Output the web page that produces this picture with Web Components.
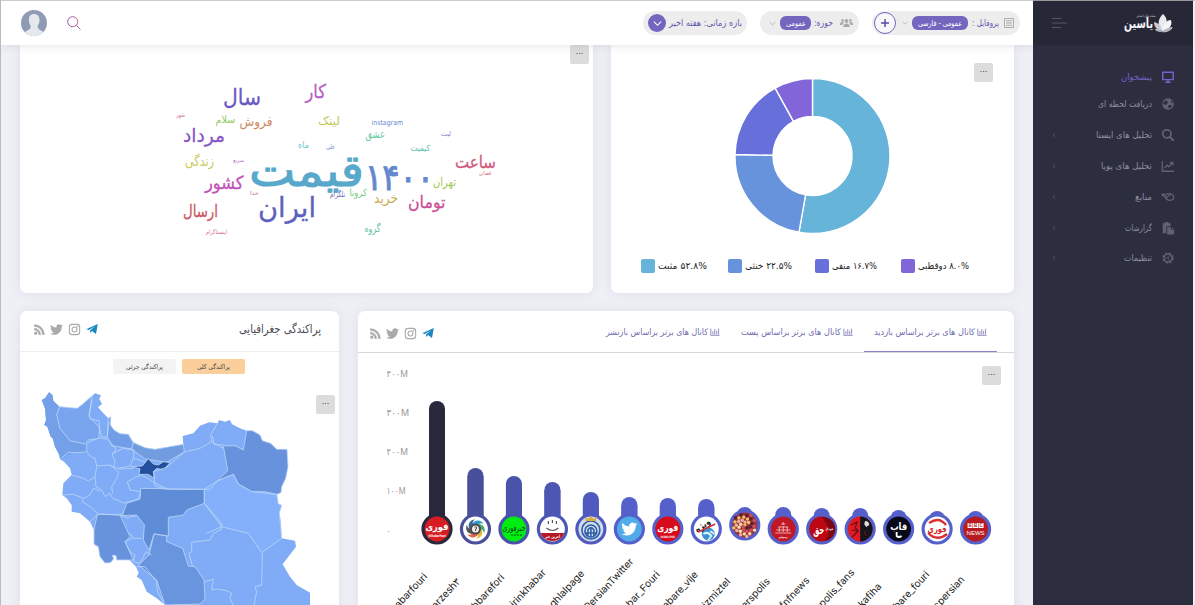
<!DOCTYPE html>
<html lang="fa"><head><meta charset="utf-8"><title>یاسین</title>
<style>html,body{margin:0;height:100%;overflow:hidden;background:#eff0f6;font-family:"DejaVu Sans","Noto Sans",sans-serif}</style></head>
<body><yasin-app></yasin-app>
<script>
const FONT='"DejaVu Sans","Noto Sans",sans-serif';
function define(name,render){customElements.define(name,class extends HTMLElement{connectedCallback(){if(this.shadowRoot)return;const r=this.attachShadow({mode:'open'});const t=document.createElement('template');t.innerHTML=render(this);r.append(t.content.cloneNode(true));}});}
const A=(e,n,d)=>e.getAttribute(n)??d;

/* one-line Persian label with a fixed measure */
define('fa-label',e=>{const w=+A(e,'w',50),s=+A(e,'s',9);return `<style>:host{display:block;flex:none;line-height:0}svg{display:block;overflow:visible}</style><svg width="${w}" height="16"><text x="${w/2}" y="${8+s*.33}" text-anchor="middle" direction="rtl" textLength="${w}" lengthAdjust="spacingAndGlyphs" fill="currentColor" font-size="${s}" font-family='${FONT}'>${e.textContent}</text></svg>`});

const ICONS={
monitor:['0 0 16 16','<path d="M2 2.5h12v8.5H2zM8 11v2.5M5 14h6" fill="none" stroke="currentColor" stroke-width="1.7"/>'],
globe:['0 0 16 16','<circle cx="8" cy="8" r="6.6" fill="currentColor"/><path d="M2 7l3-3 3 1-1 3-3 1zM9 9l3 0v2l-2 2-2-2zM11 3l3 3-2 1z" fill="#2c2d3e"/>'],
search:['0 0 16 16','<circle cx="6.7" cy="6.7" r="4.7" fill="none" stroke="currentColor" stroke-width="2"/><path d="M10 10l4.5 4.5" stroke="currentColor" stroke-width="2.4"/>'],
line:['0 0 16 16','<path d="M1.5 2.5v11.5h13.500M4 10.500l3-3.500 2 2 4-5M10 4h3.500v3.500" fill="none" stroke="currentColor" stroke-width="1.500"/>'],
sources:['0 0 16 16','<path d="M4.500 8C5 3 13 3 14.500 8c0 5-8 5-10 0L1 4M1 7l3-3M5 9c3 1 2-4 6-3" fill="none" stroke="currentColor" stroke-width="1.400"/>'],
paste:['0 0 16 16','<path d="M2 2.500h2.500V1h4v1.500H11V6H6v8H2zM7 7h4.500v3H15v5.500H7z" fill="currentColor"/><path d="M12.500 7v2H15z" fill="currentColor"/>'],
gear:['0 0 16 16','<circle cx="8" cy="8" r="5.200" fill="none" stroke="currentColor" stroke-width="2.400" stroke-dasharray="2.700 1.380"/><circle cx="8" cy="8" r="4.500" fill="none" stroke="currentColor" stroke-width="1"/><path d="M8 8l3-4M8 8l2 4M8 8H4" stroke="currentColor"/>'],
list:['0 0 16 16','<path d="M2 2h12v12H2z" fill="none" stroke="currentColor" stroke-width="1.300"/><path d="M4 5h8M4 8h8M4 11h8" stroke="currentColor" stroke-width="1.500"/>'],
users:['0 0 20 16','<g fill="currentColor"><circle cx="10" cy="5" r="3"/><circle cx="4" cy="4" r="2"/><circle cx="16" cy="4" r="2"/><path d="M5 14c0-7 10-7 10 0zM0 10c0-5 5-4 6-2-2 1-2 2-2 3H0zM20 10c0-5-5-4-6-2 2 1 2 2 2 3h4z"/></g>'],
down:['0 0 10 10','<path d="M1 3l4 4 4-4" fill="none" stroke="currentColor" stroke-width="1.200"/>'],
left:['0 0 10 10','<path d="M6.500 2.500l-2.500 2.500 2.500 2.500" fill="none" stroke="currentColor" stroke-width="1"/>'],
rss:['3.500 3.500 17 17','<path d="M6.180 15.640a2.180 2.180 0 1 1 0 4.360 2.180 2.180 0 0 1 0-4.360M4 4.440A15.560 15.560 0 0 1 19.560 20h-2.830A12.730 12.730 0 0 0 4 7.270zm0 5.660a9.900 9.900 0 0 1 9.900 9.900h-2.830A7.070 7.070 0 0 0 4 12.930z" fill="currentColor" stroke="currentColor" stroke-width=".7"/>'],
twitter:['0 0 24 24','<path d="M23.950 4.570a10 10 0 0 1-2.820.770 4.960 4.960 0 0 0 2.160-2.720c-.95.55-2 .95-3.130 1.180a4.920 4.920 0 0 0-8.380 4.480C7.690 8.090 4.070 6.130 1.640 3.160a4.820 4.820 0 0 0-.67 2.480c0 1.710.87 3.210 2.190 4.100a4.900 4.900 0 0 1-2.230-.620v.060a4.920 4.920 0 0 0 3.950 4.830 5 5 0 0 1-2.210.080 4.940 4.940 0 0 0 4.600 3.420A9.870 9.870 0 0 1 0 19.540a13.990 13.990 0 0 0 7.550 2.210c9.050 0 14-7.500 14-13.990 0-.210 0-.420-.02-.630a9.940 9.940 0 0 0 2.420-2.560z" fill="currentColor"/>'],
insta:['0 0 24 24','<g fill="none" stroke="currentColor" stroke-width="2"><rect x="2.500" y="2.500" width="19" height="19" rx="5"/><circle cx="12" cy="12" r="4.500"/></g><circle cx="17.500" cy="6.500" r="1.500" fill="currentColor"/>'],
telegram:['0 0 24 24','<path d="M.5 12.300L23.500 2 20 22l-8-5.800-3.500 3.600L8 15 18 6.500 5.800 14z" fill="currentColor"/>'],
bars:['0 0 12 12','<path d="M1 2v8h10.500M3.500 9V5M5.700 9V2.500M8 9V4.500M10.300 9V2" fill="none" stroke="currentColor" stroke-width=".9"/>']};
define('ui-icon',e=>{const [vb,p]=ICONS[A(e,'name')],w=A(e,'w',13),h=A(e,'h',w);return `<style>:host{display:block;flex:none}svg{display:block}</style><svg width="${w}" height="${h}" viewBox="${vb}">${p}</svg>`});

define('more-button',()=>`<style>:host{display:block;width:19px;height:19px;background:#dcdcdc;border-radius:2px;position:absolute}svg{display:block}</style><svg width="19" height="19"><path d="M6.500 8.500h1.200M9 8.500h1.200M11.500 8.500h1.200" stroke="#666" stroke-width="1"/></svg>`);

define('ui-card',()=>`<style>:host{display:block;position:relative;background:#fff;border-radius:7px;box-shadow:0 0 12px rgba(90,95,140,.12);box-sizing:border-box;overflow:hidden}</style><slot></slot>`);

define('filter-pill',()=>`<style>:host{display:flex;flex:none;align-items:center;height:24px;border-radius:12px;background:#ededee;box-sizing:border-box;color:#5f58ae}</style><slot></slot>`);
define('value-chip',e=>`<style>:host{display:flex;flex:none;align-items:center;justify-content:center;height:14px;border-radius:6px;background:#7465bf;color:#fff}</style><slot></slot>`);

define('top-bar',()=>`<style>
:host{display:flex;align-items:center;height:45px;box-sizing:border-box;border-top:1px solid #ccc;background:#fff;position:relative;z-index:2;box-shadow:0 1px 8px rgba(60,60,90,.13);padding:0 13px 0 20px}
.av{width:26px;height:26px;flex:none;margin-right:20px}.av svg,.s svg{display:block}.s{flex:1}
.gap{width:13px;flex:none}.dn{width:18px;height:18px;border-radius:50%;background:#7465bf;color:#fff;display:flex;align-items:center;justify-content:center;margin:0 3px 0 5px}
.plus{width:20px;height:20px;border:1px solid #7465bf;border-radius:50%;display:flex;align-items:center;justify-content:center;background:#f8f8fb;margin:0 6px 0 2px}
.g{color:#aaa}</style>
<div class="av"><svg width="26" height="26" viewBox="0 0 26 26"><defs><clipPath id="c"><circle cx="13" cy="13" r="13"/></clipPath></defs><g clip-path="url(#c)"><path d="M0 0h26v26H0z" fill="#8f9bb5"/><path d="M13 4c-4 0-5.500 3-5 7 .2 3 1.500 4 1.700 5 .4 4-5 4-6 7l3 4h13l3-4c-1-3-6.400-3-6-7 .2-1 1.500-2 1.700-5 .5-4-1.400-7-5.400-7z" fill="#e4e9ee"/></g></svg></div>
<div class="s"><svg width="14" height="14" viewBox="0 0 14 14"><defs><linearGradient id="g"><stop stop-color="#8a4fc0"/><stop offset="1" stop-color="#d05a8a"/></linearGradient></defs><g fill="none" stroke="url(#g)"><circle cx="5.700" cy="5.700" r="5"/><path d="M9.500 9.500L13.500 13.500"/></g></svg></div>
<filter-pill style="width:104px"><div class="dn"><ui-icon name="down" w="9"></ui-icon></div><fa-label w="73" s="9">بازه زمانی: هفته اخیر</fa-label></filter-pill><div class="gap"></div>
<filter-pill style="width:99px"><ui-icon class="g" name="down" w="7" style="margin:0 4px 0 9px"></ui-icon><value-chip style="width:31px"><fa-label w="20" s="8">عمومی</fa-label></value-chip><fa-label w="19" s="9" style="margin:0 7px 0 3px">حوزه:</fa-label><ui-icon class="g" name="users" w="13" h="12"></ui-icon></filter-pill><div class="gap"></div>
<filter-pill style="width:148px"><div class="plus"><svg width="8" height="8" style="display:block"><path d="M4 0v8M0 4h8" stroke="#5148a5" stroke-width="1.400"/></svg></div><ui-icon class="g" name="down" w="6"></ui-icon><value-chip style="width:56px;margin:0 4px"><fa-label w="44" s="8">عمومی - فارسی</fa-label></value-chip><fa-label w="27" s="9">پروفایل :</fa-label><ui-icon class="g" name="list" w="12" style="margin-left:4px"></ui-icon></filter-pill>`);

define('nav-item',e=>`<style>:host{display:flex;align-items:center;height:30.800px;color:${e.hasAttribute('on')?'#7263c8':'#8d8fa3'};padding:0 18px 0 17px}.i{color:${e.hasAttribute('on')?'#7263c8':'#5f6177'};margin-left:9px}.c{color:#53556a}.f{flex:1}</style>${e.hasAttribute('leaf')?'':'<ui-icon class="c" name="left" w="8"></ui-icon>'}<div class="f"></div><fa-label w="${A(e,'w')}" s="9">${A(e,'label')}</fa-label><ui-icon class="i" name="${A(e,'icon')}" w="14"></ui-icon>`);
define('side-bar',()=>`<style>:host{display:block;background:#2c2d3e;height:605px;border-right:2px solid #eceef2;box-sizing:border-box;border-top:1px solid #999}.h{height:44px;background:#262838;display:flex;align-items:center;justify-content:space-between;padding:0 20px 0 18px;color:#fff;margin-bottom:19px}nav{display:flex;flex-direction:column}svg{display:block}</style>
<div class="h"><svg width="17" height="12"><path d="M1 1.500h9M1 6h15M1 10.500h9" stroke="#555768"/></svg>
<svg width="50" height="24" viewBox="1124 10 50 24"><text x="1139.500" y="27" text-anchor="middle" textLength="29" lengthAdjust="spacingAndGlyphs" font-weight="bold" font-size="14" font-family="DejaVu Sans" fill="#f4f4f7">یاسین</text><text x="1147" y="16" text-anchor="middle" textLength="19" lengthAdjust="spacingAndGlyphs" font-size="3.500" font-family="DejaVu Sans" fill="#ddd">سامانه تحلیل اجتماعی</text><path d="M1163 30c-6-7-3-13 1-17 5 4 5 11-1 17z" fill="#e9eaee"/><path d="M1163 30c-5-1-8-4-8-9 5 1 7 4 8 9z" fill="#c9cad2"/><path d="M1163 30c1-7 4-11 9-11 2 6-3 11-9 11z" fill="#f4f4f6"/><path d="M1162 31c4-3 8-5 12-5-2 4-6 6-12 5zM1163 31c-3 0-6 0-7-3 3-1 5 0 7 3z" fill="#b3b6c2"/></svg></div>
<nav><nav-item on leaf icon="monitor" w="31" label="پیشخوان" style="height:26px;margin-bottom:-1px"></nav-item><nav-item leaf icon="globe" w="54" label="دریافت لحظه ای"></nav-item><nav-item icon="search" w="56" label="تحلیل های ایستا"></nav-item><nav-item icon="line" w="51" label="تحلیل های پویا"></nav-item><nav-item icon="sources" w="17" label="منابع"></nav-item><nav-item icon="paste" w="27" label="گزارشات"></nav-item><nav-item icon="gear" w="28" label="تنظیمات"></nav-item></nav>`);

/* words: text, left, right, baseline, size, colour */
const WORDS=[['قیمت',249,364,186,44,'#58a8cb'],['۱۴۰۰',365,434,189.500,37,'#6488cf'],['ایران',258,316,217,28,'#5d61bd'],['سال',223,261,105,22,'#6a5ac4'],['کار',305.500,326,98,19,'#b660c5'],['مرداد',183,225,142,19,'#8855c8'],['فروش',239.500,272.500,126,13.500,'#cf8867'],['سلام',215.500,235.500,122.500,10.500,'#8fcb62'],['شهر',176,185,116.500,6.500,'#d47fa9'],['لینک',318,340,124.500,12,'#c2ca5c'],['instagram',371.500,403,124.500,7,'#6587cf'],['عشق',365.500,385,138,10.500,'#62caa0'],['لیت',441,451,135.500,6.500,'#8b79cd'],['ماه',298,309,147.500,9,'#66c9ca'],['علی',326,335,148.500,6.500,'#7683cf'],['کیفیت',410.500,430,151,8.500,'#59bfb1'],['ساعت',455,496,167.500,17,'#d45a7d'],['قضائی',479,491,175,5.500,'#d86979'],['زندگی',185,214,166,14,'#ccca58'],['سریع',233,244,162,5.500,'#b472ca'],['کشور',205,243.500,188.500,18,'#c253b9'],['خدا',250,259,195,5.500,'#d0708f'],['تلگرام',330,345,196.500,8,'#6360b0'],['کرونا',349.500,367,195.500,10,'#77cc79'],['تهران',433,456,186,12,'#a2c95a'],['خرید',374,398,202.500,14,'#cda953'],['تومان',408,445.500,207.500,17,'#cc5096'],['ارسال',183,218,217,17,'#cb5862'],['اینستاگرام',206,227,234,6,'#d46a91'],['گروه',364.500,380.500,231.500,10.500,'#58c5a0']];
define('word-cloud',()=>`<style>:host{display:block}svg{display:block}</style><svg width="573" height="248" viewBox="20 45 573 248">${WORDS.map(([t,l,r,y,s,c])=>`<text x="${(l+r)/2}" y="${y}" text-anchor="middle" textLength="${r-l}" lengthAdjust="spacingAndGlyphs" font-size="${s}" fill="${c}" stroke="${c}" stroke-width="${s>30?1:s>16?.3:0}" font-family='${FONT}'>${t}</text>`).join('')}</svg>`);

define('sentiment-donut',()=>{const cx=812.500,cy=156,R=77.500,r=39.500;let a=0;const p=(q,k)=>[cx+k*Math.sin(q*2*Math.PI),cy-k*Math.cos(q*2*Math.PI)];
const seg=[[.528,'#66b4da'],[.225,'#6693dc'],[.167,'#666fda'],[.080,'#8266d9']].map(([v,c])=>{const b=a+v,l=v>.5?1:0,d=`M${p(a,R)}A${R} ${R} 0 ${l} 1 ${p(b,R)}L${p(b,r)}A${r} ${r} 0 ${l} 0 ${p(a,r)}Z`;a=b;return `<path d="${d}" fill="${c}" stroke="#fff" stroke-width="1.400"/>`}).join('');
return `<style>:host{display:block}svg{display:block}.l{display:flex;padding-left:30px}.k{display:flex;align-items:center;height:16px;gap:3px;color:#222;flex:none}.k i{width:14px;height:14px;border-radius:2px}</style><svg width="403" height="213" viewBox="611 45 403 213">${seg}</svg><div class="l">${[['#66b4da',49,'۵۲.۸% مثبت',87],['#6693dc',47,'۲۲.۵% خنثی',87],['#666fda',45,'۱۶.۷% منفی',86],['#8266d9',51,'۸.۰% دوقطبی',80]].map(([c,w,t,k])=>`<div class="k" style="width:${k}px"><i style="background:${c}"></i><fa-label w="${w}" s="9.500">${t}</fa-label></div>`).join('')}</div>`});

define('social-links',()=>`<style>:host{display:flex;gap:5px;align-items:center;color:#aaa;flex:none}</style><ui-icon name="rss" w="11"></ui-icon><ui-icon name="twitter" w="13"></ui-icon><ui-icon name="insta" w="13"></ui-icon><ui-icon name="telegram" w="12" style="color:#1a87c0"></ui-icon>`);

define('iran-map',()=>`<style>:host{display:block}svg{display:block}</style><svg width="330" height="225" viewBox="0 0 990 675"><g stroke="#b9d5f8" stroke-width="2.500" stroke-linejoin="round">
<path fill="#80abf6" stroke="none" d="M65 60L75 55 87 37 97 45 100 62 118 80 150 85 172 85 185 75 200 62 225 40 243 46 238 57 246 72 234 82 250 100 265 115 272 110 271 135 282 150 300 161 325 163 340 186 375 203 405 208 450 200 490 195 488 168 520 160 540 137 568 127 593 130 597 120 615 125 630 120 636 133 660 145 680 152 697 152 720 165 727 182 752 190 770 208 801 208 800 235 804 260 797 295 785 320 783 338 771 343 775 372 785 376 778 398 783 430 785 475 825 482 828 500 788 553 810 590 830 615 870 638 870 675 435 675 410 655 380 635 365 600 350 590 356 578 348 560 328 540 290 540 288 527 277 526 281 536 271 548 255 549 240 530 235 500 222 493 222 450 210 425 180 400 155 395 155 375 140 355 127 345 130 310 155 285 150 265 132 245 120 238 118 225 105 200 98 175 92 170 82 140 73 135 78 120 75 85Z"/>
<path fill="#74a0ea" stroke="none" d="M65 60L75 55 87 37 97 45 100 62 118 80 110 105 120 145 150 182 200 187 200 218 165 215 120 238 118 225 105 200 98 175 92 170 82 140 73 135 78 120 75 85Z"/>
<path fill="#79a5ef" d="M118 80L172 85 185 75 216 48 207 108 238 142 237 175 205 180 195 192 150 182 120 145 110 105Z"/>
<path fill="#719ee7" d="M265 115L272 110 271 135 282 150 300 161 325 163 340 190 335 207 275 197 262 170Z"/>
<path fill="#719cdf" d="M340 188L375 203 405 208 490 193 493 216 440 247 375 237 335 207Z"/>
<path fill="#6992dc" d="M680 152L697 152 720 165 727 182 752 190 770 208 801 208 804 260 797 295 785 320 783 338 770 343 735 335 695 335 655 312 640 283 592 303 612 283 623 272 610 198 645 197 670 210Z"/>
<path fill="#5f8cd7" d="M362 325L553 328 553 370 500 390 490 405 445 412 445 468 402 462 387 510 370 480 373 435 350 405 307 407 320 370 360 357Z"/>
<path fill="#6994de" d="M402 462L440 468 440 485 488 505 505 558 525 560 552 600 555 658 540 672 435 675 410 600 355 555 387 525Z"/>
<path fill="#6792dc" d="M232 402L300 405 330 470 315 485 340 540 290 540 288 527 277 526 281 536 271 548 255 549 240 530 235 500 222 493 222 450Z"/>
<path fill="#84b0fb" d="M553 328L592 303 640 283 655 312 695 335 770 343 775 372 785 376 778 398 785 475 725 518 685 460 605 440 553 370Z"/>
<path fill="#23509c" d="M333 260L367 258 385 236 400 252 415 255 430 245 450 248 430 270 410 265 400 275 405 296 385 283 357 283 360 266Z"/>
<path fill="none" d="M216 60L207 108 212 118 238 122 238 142 245 170 262 172 267 125M200 192L215 182 240 173 262 178 280 197 288 210 276 222 285 245 280 260 300 267 340 265M200 192V215L215 232 225 235 230 258 270 255 280 262M120 238L145 217 175 218 200 215M155 285L190 295 205 303 225 290 230 260M225 290L228 320 245 330 255 350 270 340 278 355 310 368M270 255L295 275 293 290 275 320 278 340M127 345L160 343 190 355 210 345 220 325 240 333M190 355L187 365 210 380 235 402 300 405 310 400M210 425L235 402M276 222L310 205 342 210 340 235 375 245M340 235L330 258 295 265M322 305L345 293 362 285 385 295 405 310 440 325M322 305L330 330 362 335 355 357 310 370M300 405L325 415 330 410 350 408M315 485L340 473 330 460M365 475L340 475M315 485L330 515 345 525 340 545 360 550 378 515 395 525M350 560L375 560 410 605 412 635 432 670M400 275L440 262 493 216 540 205 575 185 572 165 592 130M575 185L610 205M400 275L405 318 440 328H570L592 303M578 168L582 193 610 195M553 370L605 430 604 448 580 460 570 480 515 487M605 440L560 460M515 487L515 515 507 520 517 558M727 518L725 615 705 620 710 635 702 675M553 605L580 598 575 630 590 627 620 632 635 640 630 655 640 675"/></g></svg>`);
define('geo-card',()=>`<style>:host{display:block}.h{height:41px;border-bottom:1px solid #ececec;box-sizing:border-box;display:flex;align-items:center;justify-content:space-between;padding:0 18px 4px 14px;color:#4c4c55}.b{display:flex;justify-content:center;gap:6px;padding-top:7px;height:21px;align-items:flex-start;box-sizing:content-box;width:318px}.b div{width:63px;height:15px;border-radius:2px;background:#f3f3f3;display:flex;justify-content:center;align-items:center;color:#444}.b .o{background:#fbcf9b}</style><div class="h"><social-links></social-links><fa-label w="82" s="12">پراکندگی جغرافیایی</fa-label></div><div class="b"><div><fa-label w="37" s="6.500">پراکندگی جزئی</fa-label></div><div class="o"><fa-label w="33" s="6.500">پراکندگی کلی</fa-label></div></div><iran-map></iran-map><more-button style="left:296px;top:84px"></more-button>`);

const F=(x,y,w,s,c,t,b='bold')=>`<text x="${x}" y="${y}" text-anchor="middle" textLength="${w}" lengthAdjust="spacingAndGlyphs" font-size="${s}" font-weight="${b}" fill="${c}" font-family='${FONT}'>${t}</text>`;
const LOGOS=[
['#d71d22',F(0,1,23,10,'#fff','فوری')+F(0,8,18,3.500,'#fff','@KhabarFouri')],
['#fff',['#2d9ac8','#4ba875','#e4b83e','#dd6645','#555','#386b9b'].map((c,i)=>`<path d="M-3-5C0-10 6-9 8-5 5-7 3-5 2-3z" fill="${c}" transform="rotate(${i*60})"/>`).join('')+'<circle r="5.500" fill="#4b4b4b"/><circle r="3.500" fill="#eee"/><path d="M-1-2h2v2H0v2" fill="none" stroke="#555"/>'],
['#00ed12',F(0,2,23,9,'#073b10','خبرفوری','normal')+'<path d="M-3 6H9" stroke="#064d0f" stroke-dasharray="2 1"/>'],
['#fff','<path d="M-12 4H12A13 13 0 0 1-12 4z" fill="#b51827"/><path d="M-6-1q6 5 12 0M-4-5v-3M0-6v-3M4-5v-3" fill="none" stroke="#555" stroke-width="1.200"/>'+F(0,9,15,4,'#fff','آخرین خبر')],
['#d2dcec','<g fill="none" stroke="#2f5ea8" stroke-width="1.600"><circle r="9" cy="1"/><circle r="6" cy="2"/><path d="M-3 7v-6q3-5 6 0v6M-6 4h12M0-2v10"/></g><path d="M-5-8l-1-4 3 2 3-3 3 3 3-2-1 4z" fill="#d8af46"/>'],
['#50abe9','<svg x="-8" y="-8" width="16" height="16" viewBox="0 0 24 24"><g color="#fff">'+ICONS.twitter[1]+'</g></svg>'],
['#d60b1b',F(0,2,21,10,'#fff','فوری')+F(0,9,14,3,'#fff','KHABAR_FOURI')],
['#fff','<circle cx="2" cy="5" r="6.500" fill="#3a92cf"/><path d="M-3 5q5-3 8 2l-3 4M4 2l4 3" stroke="#d6efff" stroke-width="2" fill="none"/><g transform="rotate(-35)">'+F(-1,-2,17,9,'#222','ویژه')+'</g><path d="M-8 3L9-5" stroke="#d53036" stroke-width="1.500"/>'],
['#9a3540',Array.from({length:34},(_,i)=>{const a=i*2.4,k=2.05*Math.sqrt(i);return `<circle cx="${(k*Math.cos(a)).toFixed(1)}" cy="${(k*Math.sin(a)).toFixed(1)}" r="1.700" fill="${['#efc85b','#d44e5d','#f2b0a0','#5b1f2d','#f3e0a0'][i%5]}"/>`}).join('')],
['#c01925','<g stroke="#f3bdbb" fill="none" stroke-width=".9"><path d="M-8 4H8M-7 1H7M-5-2H5M-2-5H2M0-7v3M-4-2v5M4-2v5M0-3v6"/></g>'+F(0,9,9,3,'#fff','پرسپولیس')],
['#bd0813','<path d="M0-12A12 12 0 0 1 3 12Q12 2 0-12z" fill="#7d0710"/>'+F(-3,5,11,13,'#fff','حق')+F(7.500,1,8,3,'#fff','فوتبال')],
['#e01922','<path d="M0-12.400A12.400 12.400 0 0 1 0 12.400z" fill="#15151b"/><path d="M-9-4l6-3-2 6 3 3-6 6M-8 1l6 1M4 2l2 5" stroke="#651018" fill="none" stroke-width="1.200"/><path d="M5-8q4 0 4 4l-3 2-2-3z" fill="#ddd"/>'],
['#080a19',F(0,1,17,10,'#fff','قاب')+'<path d="M-2 3v4q2 2 5 0" fill="none" stroke="#fff" stroke-width="1.800"/>'],
['#fff','<path d="M-8-6Q2-13 9-4M-9 4Q0 13 10 5" fill="none" stroke="#db3032" stroke-width="2.400"/>'+F(0,3,19,9,'#d62027','فوری')],
['#b71a20','<path d="M-8-6h5v5h-5zM-2.500-6h5v5h-5zM3-6h5v5H3z" fill="#fff"/>'+['-5.500','0','5.500'].map((x,i)=>`<text x="${x}" y="-2" text-anchor="middle" font-size="4.500" font-weight="bold" font-family="Liberation Sans" fill="#b71a20">${'BBC'[i]}</text>`).join('')+'<text x="-9" y="6" font-size="6" font-family="Liberation Sans" fill="#fff" textLength="18">NEWS</text>']];
const TOPS=[401,468,476,482,492,497,498,499,507,507,508,508,510,511,511];
const NAMES=[['khabarfouri',428,577],['varzesh۳',461,582],['akhbarefori',505,578],['shirinkhabar',546.500,573],['esteghlalpage',585,574],['OfficialPersianTwitter',634,562],['Khabar_Fouri',660.500,575],['khabare_vije',698.500,575],['rizmiztel',731,582],['perspolis',770.500,582],['varzeshfnfnews',810,581],['perspolis_fans',855,573],['kafiha',882,587],['akhbare_fouri',930,575],['bbcpersian',965,580]];
define('channel-chart',()=>`<style>:host{display:block}svg{display:block}</style><svg width="656" height="252" viewBox="358 353 656 252">
${[['۴۰۰M',373,21.500],['۳۰۰M',412,22.500],['۲۰۰M',451.500,21.500],['۱۰۰M',490.500,19],['۰',530,4]].map(([t,y,w])=>`<text x="386.500" y="${y+3.500}" font-size="9.500" fill="#999" textLength="${w}" lengthAdjust="spacingAndGlyphs" font-family='Inter,${FONT}'>${t}</text>`).join('')}
${TOPS.map((t,i)=>{const x=437+i*38.470,y=i==8?525:529,c=['#28293c','#484f9b','#4953a9','#4d57b3','#5059c0'][i]||'#5560cb';return `<rect x="${x-8}" y="${t}" width="16" height="${y-t}" rx="8" fill="${c}"/><rect x="${x-8}" y="${Math.min(t+8,y)}" width="16" height="${Math.max(0,y-t-8)}" fill="${c}"/><circle cx="${x}" cy="${y}" r="15.600" fill="${c}"/><g transform="translate(${x} ${y})"><circle r="12.400" fill="${LOGOS[i][0]}"/>${LOGOS[i][1]}</g>`}).join('')}
${NAMES.map(([t,x,y])=>`<text transform="translate(${x} ${y}) rotate(-47)" text-anchor="end" font-size="10" fill="#222" font-family='Inter,"DejaVu Sans",sans-serif'>${t}</text>`).join('')}</svg>`);
define('channels-card',()=>`<style>:host{display:block}.h{height:42px;border-bottom:1px solid #d8d5d8;box-sizing:border-box;display:flex;align-items:stretch;padding:0 17px 0 12px;color:#706cae}.f{flex:1}.t{display:flex;align-items:center;justify-content:center;gap:2px;width:134px;height:41px;border-bottom:1px solid transparent;padding-top:2px;box-sizing:border-box}.t.o{border-color:#8984c8;width:133px}social-links{padding-top:3px}</style><div class="h"><social-links></social-links><div class="f"></div>${[['کانال های برتر براساس بازنشر',102,''],['کانال های برتر براساس پست',100,''],['کانال های برتر براساس بازدید',101,'o']].map(([t,w,o])=>`<div class="t ${o}"><fa-label w="${w}" s="9">${t}</fa-label><ui-icon name="bars" w="10"></ui-icon></div>`).join('')}</div><channel-chart></channel-chart><more-button style="left:624px;top:55px"></more-button>`);

define('yasin-app',()=>`<style>:host{display:grid;grid-template-columns:1033px 162px;height:605px;overflow:hidden}
main{border-left:1px solid #bbb;box-sizing:border-box;height:605px;overflow:hidden}.r{display:flex;padding-left:19px}.r1{height:248px;gap:18px}.r2{gap:19px;padding-top:18px}.r1 ui-card{border-radius:0 0 7px 7px}</style>
<main><top-bar></top-bar><div class="r r1"><ui-card style="width:573px"><word-cloud></word-cloud><more-button style="left:550px;top:0"></more-button></ui-card><ui-card style="width:403px"><sentiment-donut></sentiment-donut><more-button style="left:363px;top:18px"></more-button></ui-card></div>
<div class="r r2"><ui-card style="width:319px;height:310px"><geo-card></geo-card></ui-card><ui-card style="width:656px;height:310px"><channels-card></channels-card></ui-card></div></main><side-bar></side-bar>`);
</script></body></html>
